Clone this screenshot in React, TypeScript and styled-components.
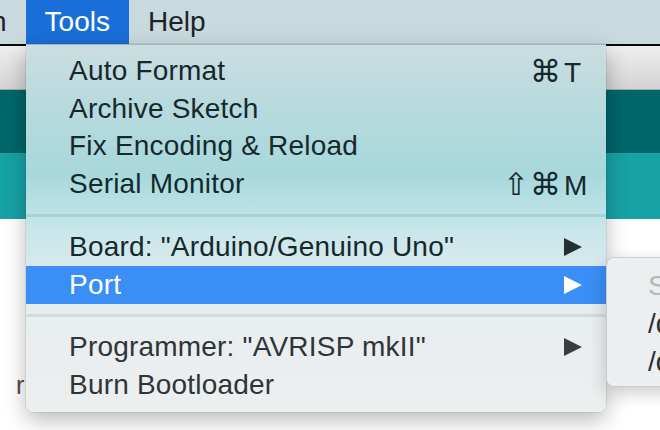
import React from 'react';
import styled, { createGlobalStyle } from 'styled-components';

const GlobalStyle = createGlobalStyle`
  body {
    margin: 0;
    background: #ffffff;
    font-family: "Liberation Sans", "DejaVu Sans", sans-serif;
  }
  #root {
    width: 660px;
    height: 430px;
    overflow: hidden;
    position: relative;
  }
`;

const ScScreen = styled.div`
  display: flex;
  flex-direction: column;
  height: 430px;
`;

const ScMenuBar = styled.div`
  display: flex;
  flex-direction: row;
  height: 44px;
  background-color: #c9dadf;
  flex-shrink: 0;
`;

const ScBarItem = styled.div<{ $active?: boolean; $offset?: number }>`
  padding: 0 19px;
  margin-left: ${(p) => p.$offset || 0}px;
  height: 44px;
  line-height: 44px;
  font-size: 28px;
  color: ${(p) => (p.$active ? '#ffffff' : '#1f2224')};
  background-color: ${(p) => (p.$active ? '#1a6ed8' : 'transparent')};
  white-space: nowrap;
`;

const ScWindow = styled.div`
  flex: 1;
  display: flex;
  flex-direction: column;
  border-top: 2px solid #0a0a0a;
`;

const ScToolbar = styled.div`
  height: 43px;
  background: linear-gradient(#efefef, #d3d3d3);
  border-bottom: 1px solid #a9a9a9;
`;

const ScHeader = styled.div`
  height: 63px;
  background-color: #00666a;
`;

const ScTabs = styled.div`
  height: 66px;
  background-color: #17a2a6;
`;

const ScEditor = styled.div`
  flex: 1;
  background-color: #ffffff;
  padding: 151px 0 0 16px;
  font-size: 25px;
  line-height: 30px;
  color: #4b4b4b;
`;

const ScMenu = styled.div`
  position: absolute;
  left: 26px;
  top: 44px;
  width: 580px;
  height: 368px;
  box-sizing: border-box;
  padding: 7px 0 8px;
  border-top: 1px solid #9fb3b8;
  border-radius: 0 0 8px 8px;
  background: linear-gradient(
    #cbdee1 0px,
    #b8dadd 60px,
    #a8d8dc 130px,
    #bce3e6 168px,
    #c8e7ea 185px,
    #dce9ec 230px,
    #e8edef 272px,
    #eceff0 100%
  );
  box-shadow: 0 8px 22px rgba(0, 0, 0, 0.28), 0 0 0 1px rgba(0, 0, 0, 0.06);
  display: flex;
  flex-direction: column;
`;

const ScItem = styled.div<{ $highlight?: boolean; $tone?: 'top' | 'bottom' }>`
  display: flex;
  flex-direction: row;
  align-items: center;
  height: 38px;
  padding: 0 24px 0 43px;
  font-size: 28px;
  letter-spacing: 0.2px;
  white-space: nowrap;
  color: ${(p) =>
    p.$highlight ? '#ffffff' : p.$tone === 'bottom' ? '#2f3436' : '#15292d'};
  background-color: ${(p) => (p.$highlight ? '#3a8ef5' : 'transparent')};
`;

const ScLabel = styled.span`
  flex: 1;
`;

const ScShortcut = styled.span`
  display: flex;
  flex-direction: row;
  align-items: baseline;
`;

const ScMods = styled.span`
  font-family: "DejaVu Sans", sans-serif;
  font-size: 31px;
  letter-spacing: 1px;
  text-align: right;
`;

const ScKey = styled.span`
  width: 18px;
  margin-left: 2px;
  text-align: left;
`;

const ScArrow = styled.span<{ $color: string }>`
  width: 0;
  height: 0;
  border-top: 9.5px solid transparent;
  border-bottom: 9.5px solid transparent;
  border-left: 18px solid ${(p) => p.$color};
`;

const ScSeparator = styled.div<{ $color: string }>`
  height: 25px;
  display: flex;
  align-items: center;

  &::after {
    content: '';
    flex: 1;
    height: 3px;
    background-color: ${(p) => p.$color};
  }
`;

const ScSubMenu = styled.div`
  position: absolute;
  left: 606px;
  top: 257px;
  width: 320px;
  height: 130px;
  box-sizing: border-box;
  padding-top: 9px;
  border-radius: 8px;
  background-color: #eceff0;
  border: 1px solid #c9cdcf;
  box-shadow: 0 6px 18px rgba(0, 0, 0, 0.2);
`;

const ScSubItem = styled.div<{ $disabled?: boolean }>`
  height: 38px;
  line-height: 38px;
  padding-left: 41px;
  font-size: 28px;
  white-space: nowrap;
  color: ${(p) => (p.$disabled ? '#b4b7b9' : '#2b2f31')};
`;

export default function App() {
  return (
    <>
      <GlobalStyle />
      <ScScreen>
        <ScMenuBar>
          <ScBarItem $offset={-98}>{'Sketch'}</ScBarItem>
          <ScBarItem $active>{'Tools'}</ScBarItem>
          <ScBarItem>{'Help'}</ScBarItem>
        </ScMenuBar>
        <ScWindow>
          <ScToolbar />
          <ScHeader />
          <ScTabs />
          <ScEditor>{'r'}</ScEditor>
        </ScWindow>
      </ScScreen>

      <ScMenu>
        <ScItem>
          <ScLabel>{'Auto Format'}</ScLabel>
          <ScShortcut>
            <ScMods>{'⌘'}</ScMods>
            <ScKey>{'T'}</ScKey>
          </ScShortcut>
        </ScItem>
        <ScItem>
          <ScLabel>{'Archive Sketch'}</ScLabel>
        </ScItem>
        <ScItem>
          <ScLabel>{'Fix Encoding & Reload'}</ScLabel>
        </ScItem>
        <ScItem>
          <ScLabel>{'Serial Monitor'}</ScLabel>
          <ScShortcut>
            <ScMods>{'⇧⌘'}</ScMods>
            <ScKey>{'M'}</ScKey>
          </ScShortcut>
        </ScItem>
        <ScSeparator $color="#a9cfd3" />
        <ScItem>
          <ScLabel>{'Board: "Arduino/Genuino Uno"'}</ScLabel>
          <ScArrow $color="#223033" />
        </ScItem>
        <ScItem $highlight>
          <ScLabel>{'Port'}</ScLabel>
          <ScArrow $color="#ffffff" />
        </ScItem>
        <ScSeparator $color="#d4dadd" />
        <ScItem $tone="bottom">
          <ScLabel>{'Programmer: "AVRISP mkII"'}</ScLabel>
          <ScArrow $color="#3a3d3f" />
        </ScItem>
        <ScItem $tone="bottom">
          <ScLabel>{'Burn Bootloader'}</ScLabel>
        </ScItem>
      </ScMenu>

      <ScSubMenu>
        <ScSubItem $disabled>{'Serial ports'}</ScSubItem>
        <ScSubItem>{'/dev/cu.Bluetooth-Incoming-Port'}</ScSubItem>
        <ScSubItem>{'/dev/cu.usbmodem1411'}</ScSubItem>
      </ScSubMenu>
    </>
  );
}
